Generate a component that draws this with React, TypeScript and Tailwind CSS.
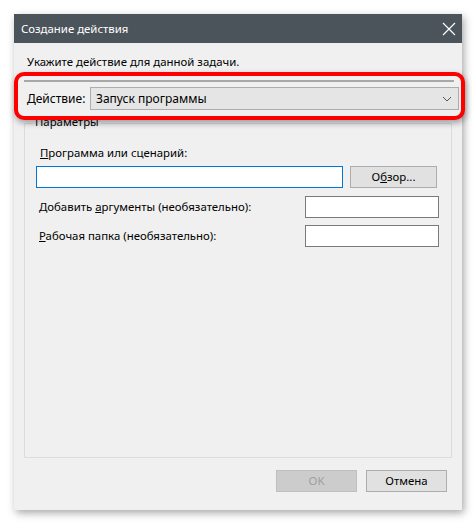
import React from 'react';

const font = { fontFamily: '"Noto Sans", "Open Sans", sans-serif' };

const App: React.FC = () => {
    return (
        <div className="w-[476px] h-[524px] bg-white pt-[14px] pl-[14px] text-[11.4px] text-black" style={font}>
            <div className="relative w-[448px] h-[496px] bg-[#f0f0f0] flex flex-col shadow-[2px_3px_8px_rgba(0,0,0,0.35)]">
                {/* title bar */}
                <div className="h-[29px] bg-[#4b545b] flex items-center justify-between pl-[7px] pr-[6px] text-white">
                    <span className="text-[11.4px]">Создание действия</span>
                    <svg width="14" height="14" viewBox="0 0 14 14">
                        <path d="M1 1 L13 13 M13 1 L1 13" stroke="#ffffff" strokeWidth="1.2" />
                    </svg>
                </div>

                <div className="flex-1 flex flex-col px-[10px]">
                    <p className="mt-[11px] ml-[3px] leading-[16px]">Укажите действие для данной задачи.</p>

                    {/* parameters group */}
                    <div className="relative mt-[53px] h-[335px] border border-[#dcdcdc] rounded-[1px]">
                        <span className="absolute -top-[10px] left-[8px] px-[2px] bg-[#f0f0f0] leading-[16px]">Параметры</span>
                        <div className="pt-[21px] pl-[15px] leading-[16px]">
                            <u>П</u>рограмма или сценарий:
                        </div>
                        <div className="flex items-center mt-[5px] pl-[11px]">
                            <div className="w-[307px] h-[22px] bg-white border border-[#0078d7]" />
                            <button className="ml-[7px] w-[87px] h-[22px] bg-[#e1e1e1] border border-[#adadad]">
                                О<u>б</u>зор...
                            </button>
                        </div>
                        <div className="flex items-center justify-between mt-[8px] pl-[14px] pr-[12px]">
                            <span>Добавить <u>а</u>ргументы (необязательно):</span>
                            <div className="w-[134px] h-[22px] bg-white border border-[#7a7a7a]" />
                        </div>
                        <div className="flex items-center justify-between mt-[7px] pl-[14px] pr-[12px]">
                            <span><u>Р</u>абочая папка (необязательно):</span>
                            <div className="w-[134px] h-[22px] bg-white border border-[#7a7a7a]" />
                        </div>
                    </div>

                    <div className="flex justify-end gap-[9px] mt-[12px] pr-[5px]">
                        <button className="w-[81px] h-[22px] bg-[#cccccc] border border-[#bfbfbf] text-[#a0a0a0]">OK</button>
                        <button className="w-[81px] h-[22px] bg-[#e1e1e1] border border-[#adadad]">Отмена</button>
                    </div>
                </div>

                {/* magnified highlight of the action combobox */}
                <div className="absolute left-0 top-[58px] w-[451px] h-[48px] rounded-[10px] border-[4px] border-[#ff0000] bg-[#f0f0f0] shadow-[1px_3px_6px_rgba(0,0,0,0.35)] overflow-hidden">
                    <div className="ml-[6px] mt-[4px] mr-[7px] h-[2px] bg-[#a8a8a8]" />
                    <div className="flex items-center mt-[5px] pl-[9px] pr-[2px]">
                        <span className="text-[12px] leading-[22px] w-[63px]"><u>Д</u>ействие:</span>
                        <div className="flex-1 h-[23px] bg-[#e5e5e5] border border-[#adadad] flex items-center justify-between pl-[5px] pr-[6px]">
                            <span className="text-[12px]">Запуск программы</span>
                            <svg width="10" height="6" viewBox="0 0 10 6">
                                <path d="M1 1 L5 5 L9 1" stroke="#555" strokeWidth="1" fill="none" />
                            </svg>
                        </div>
                    </div>
                </div>
            </div>
        </div>
    );
};

export default App;
